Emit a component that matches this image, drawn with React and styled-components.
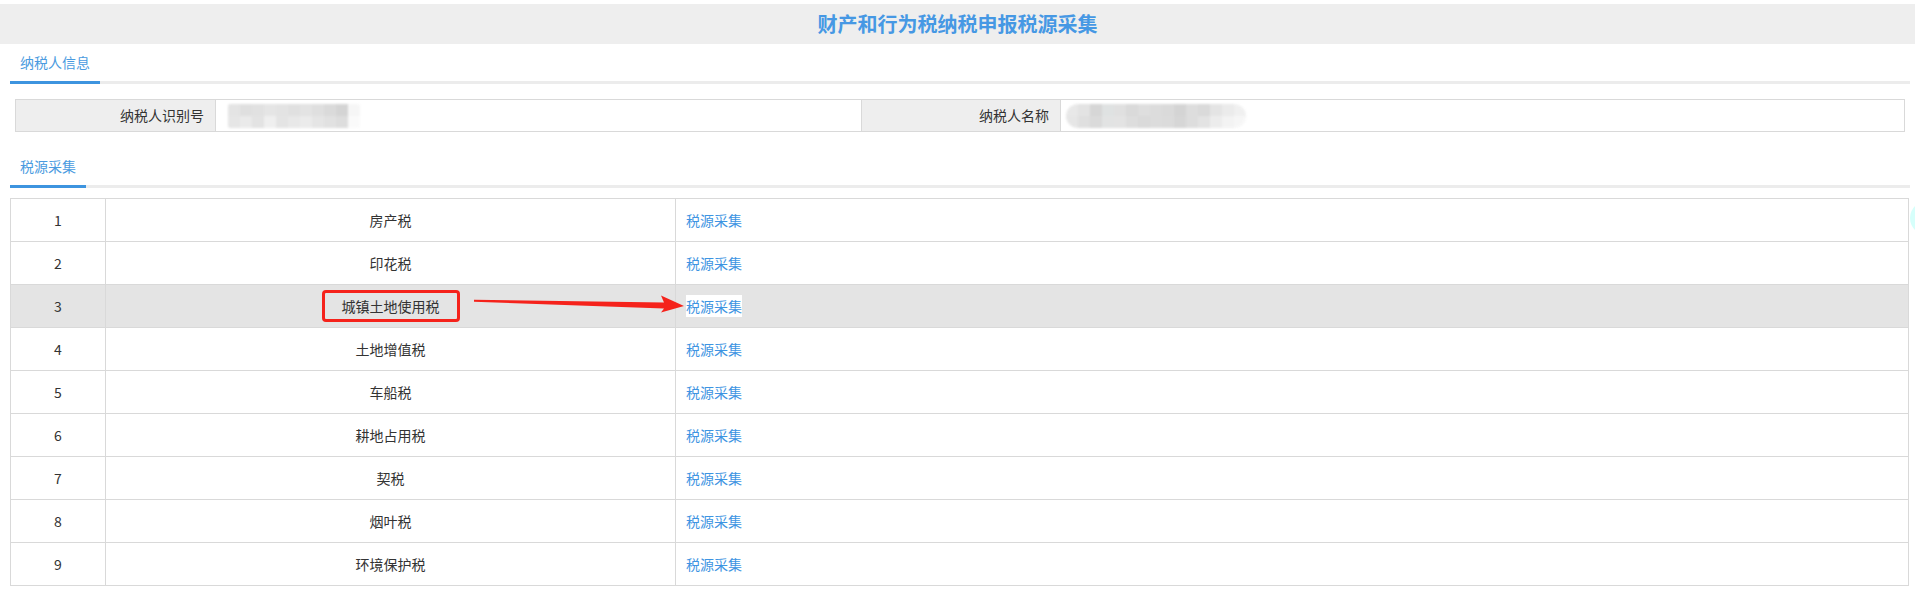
import React from "react";
import styled, { createGlobalStyle } from "styled-components";

const GlobalStyle = createGlobalStyle`
  html, body {
    margin: 0;
    padding: 0;
    background: #fff;
    font-family: "Noto Sans CJK SC", "Noto Sans", sans-serif;
    color: #333;
  }
`;

const Page = styled.div`
  position: relative;
  width: 1915px;
  padding-top: 4px;
  overflow: hidden;
`;

const TitleBar = styled.div`
  height: 40px;
  line-height: 40px;
  background: #eeeeee;
  text-align: center;
  font-size: 20px;
  font-weight: bold;
  color: #4698e4;
`;

const Section = styled.div`
  margin: 0 5px 0 10px;
`;

const TabBar = styled.div`
  display: flex;
  height: 37px;
  margin-top: ${(p) => p.$top}px;
  border-bottom: 3px solid #ececec;
`;

const Tab = styled.div`
  width: ${(p) => p.$width}px;
  box-sizing: border-box;
  padding: 9px 0 0 10px;
  font-size: 14px;
  line-height: 18px;
  color: #4a9be0;
  border-bottom: 3px solid #3d94df;
  margin-bottom: -3px;
`;

const InfoGrid = styled.div`
  display: grid;
  grid-template-columns: 200px 645px 200px 1fr;
  margin: 15px 5px 0 5px;
  height: 33px;
  box-sizing: border-box;
  border: 1px solid #d9d9d9;
`;

const InfoLabel = styled.div`
  background: #eeeeee;
  text-align: right;
  padding-right: 11px;
  font-size: 14px;
  line-height: 31px;
  color: #333;
  border-right: 1px solid #d9d9d9;
  border-left: ${(p) => (p.$divider ? "1px solid #d9d9d9" : "none")};
`;

const InfoValue = styled.div`
  display: flex;
  align-items: center;
  padding-left: ${(p) => p.$pad}px;
`;

const Mosaic = styled.div`
  display: grid;
  grid-template-columns: repeat(${(p) => p.$cols}, 12px);
  grid-template-rows: 12px 12px;
  border-radius: ${(p) => p.$radius}px;
  overflow: hidden;
  filter: blur(1.2px);
  opacity: 0.9;
`;

const MosaicCell = styled.div`
  background: ${(p) => p.$c};
`;

const TableWrap = styled.div`
  position: relative;
  margin-top: 10px;
  margin-right: 1px;
`;

const Table = styled.table`
  width: 100%;
  border-collapse: collapse;
  table-layout: fixed;
  font-size: 14px;
`;

const Row = styled.tr`
  background: ${(p) => (p.$active ? "#e4e4e4" : "#fff")};
`;

const Cell = styled.td`
  height: 42px;
  padding: 0;
  border: 1px solid #d9d9d9;
  text-align: ${(p) => p.$align || "center"};
  padding-left: ${(p) => (p.$align === "left" ? "10px" : "0")};
  color: #333;
`;

const Link = styled.a`
  color: #3d94e2;
  text-decoration: none;
  background: ${(p) => (p.$selected ? "#fff" : "transparent")};
  padding: 1px 0;
  cursor: pointer;
`;

const Marked = styled.span`
  display: inline-block;
  padding: 5px 17px;
  line-height: 16px;
  border: 3px solid #f5221b;
  border-radius: 4px;
`;

const ArrowLayer = styled.svg`
  position: absolute;
  left: 452px;
  top: 97px;
  pointer-events: none;
`;

const FloatBubble = styled.div`
  position: absolute;
  left: 1910px;
  top: 200px;
  width: 40px;
  height: 36px;
  border-radius: 50%;
  background: #d6fffb;
`;

const shades1 = [
  "#e2e2e2", "#dcdcdc", "#dedede", "#e3e3e3", "#e1e1e1", "#dddddd", "#e0e0e0", "#dcdcdc", "#d7d7d7", "#d0d0d0", "#f6f6f6",
  "#e4e4e4", "#e8e8e8", "#e0e0e0", "#eeeeee", "#e2e2e2", "#e6e6e6", "#e9e9e9", "#e3e3e3", "#dedede", "#dadada", "#fafafa",
];
const shades2 = [
  "#e6e6e6", "#e0e0e0", "#d2d2d2", "#dcdfdf", "#dddddd", "#d6d6d6", "#dbdbdb", "#d9d9d9", "#d7d7d7", "#d0d0d0", "#dadada", "#d6d6d6", "#e2e2e2", "#e9e9e9", "#efefef",
  "#e4e4e4", "#dcdcdc", "#d6d6d6", "#dfe1e1", "#e0e0e0", "#dadada", "#d6d6d6", "#d9d9d9", "#d8d8d8", "#d2d2d2", "#dadada", "#e0e0e0", "#ebebeb", "#f2f2f2", "#f6f6f6",
];

const taxes = [
  "房产税",
  "印花税",
  "城镇土地使用税",
  "土地增值税",
  "车船税",
  "耕地占用税",
  "契税",
  "烟叶税",
  "环境保护税",
];

function Blur({ shades, cols, radius }) {
  return (
    <Mosaic $cols={cols} $radius={radius}>
      {shades.map((c, i) => (
        <MosaicCell key={i} $c={c} />
      ))}
    </Mosaic>
  );
}

export default function App() {
  return (
    <Page>
      <GlobalStyle />
      <TitleBar>财产和行为税纳税申报税源采集</TitleBar>

      <Section>
        <TabBar $top={0}>
          <Tab $width={90}>纳税人信息</Tab>
        </TabBar>
        <InfoGrid>
          <InfoLabel>纳税人识别号</InfoLabel>
          <InfoValue $pad={12}>
            <Blur shades={shades1} cols={11} radius={2} />
          </InfoValue>
          <InfoLabel $divider>纳税人名称</InfoLabel>
          <InfoValue $pad={5}>
            <Blur shades={shades2} cols={15} radius={12} />
          </InfoValue>
        </InfoGrid>

        <TabBar $top={16}>
          <Tab $width={76}>税源采集</Tab>
        </TabBar>

        <TableWrap>
          <Table>
            <colgroup>
              <col style={{ width: 95 }} />
              <col style={{ width: 570 }} />
              <col />
            </colgroup>
            <tbody>
              {taxes.map((name, i) => (
                <Row key={name} $active={i === 2}>
                  <Cell>{i + 1}</Cell>
                  <Cell>{i === 2 ? <Marked>{name}</Marked> : name}</Cell>
                  <Cell $align="left">
                    <Link $selected={i === 2}>税源采集</Link>
                  </Cell>
                </Row>
              ))}
            </tbody>
          </Table>
          <ArrowLayer width="224" height="22" viewBox="0 0 224 22">
            <polygon
              points="12,4.8 202,7.6 199,0.5 222,11 199,17.5 202,13.6 12,6.8"
              fill="#f5221b"
            />
          </ArrowLayer>
        </TableWrap>
      </Section>

      <FloatBubble />
    </Page>
  );
}
